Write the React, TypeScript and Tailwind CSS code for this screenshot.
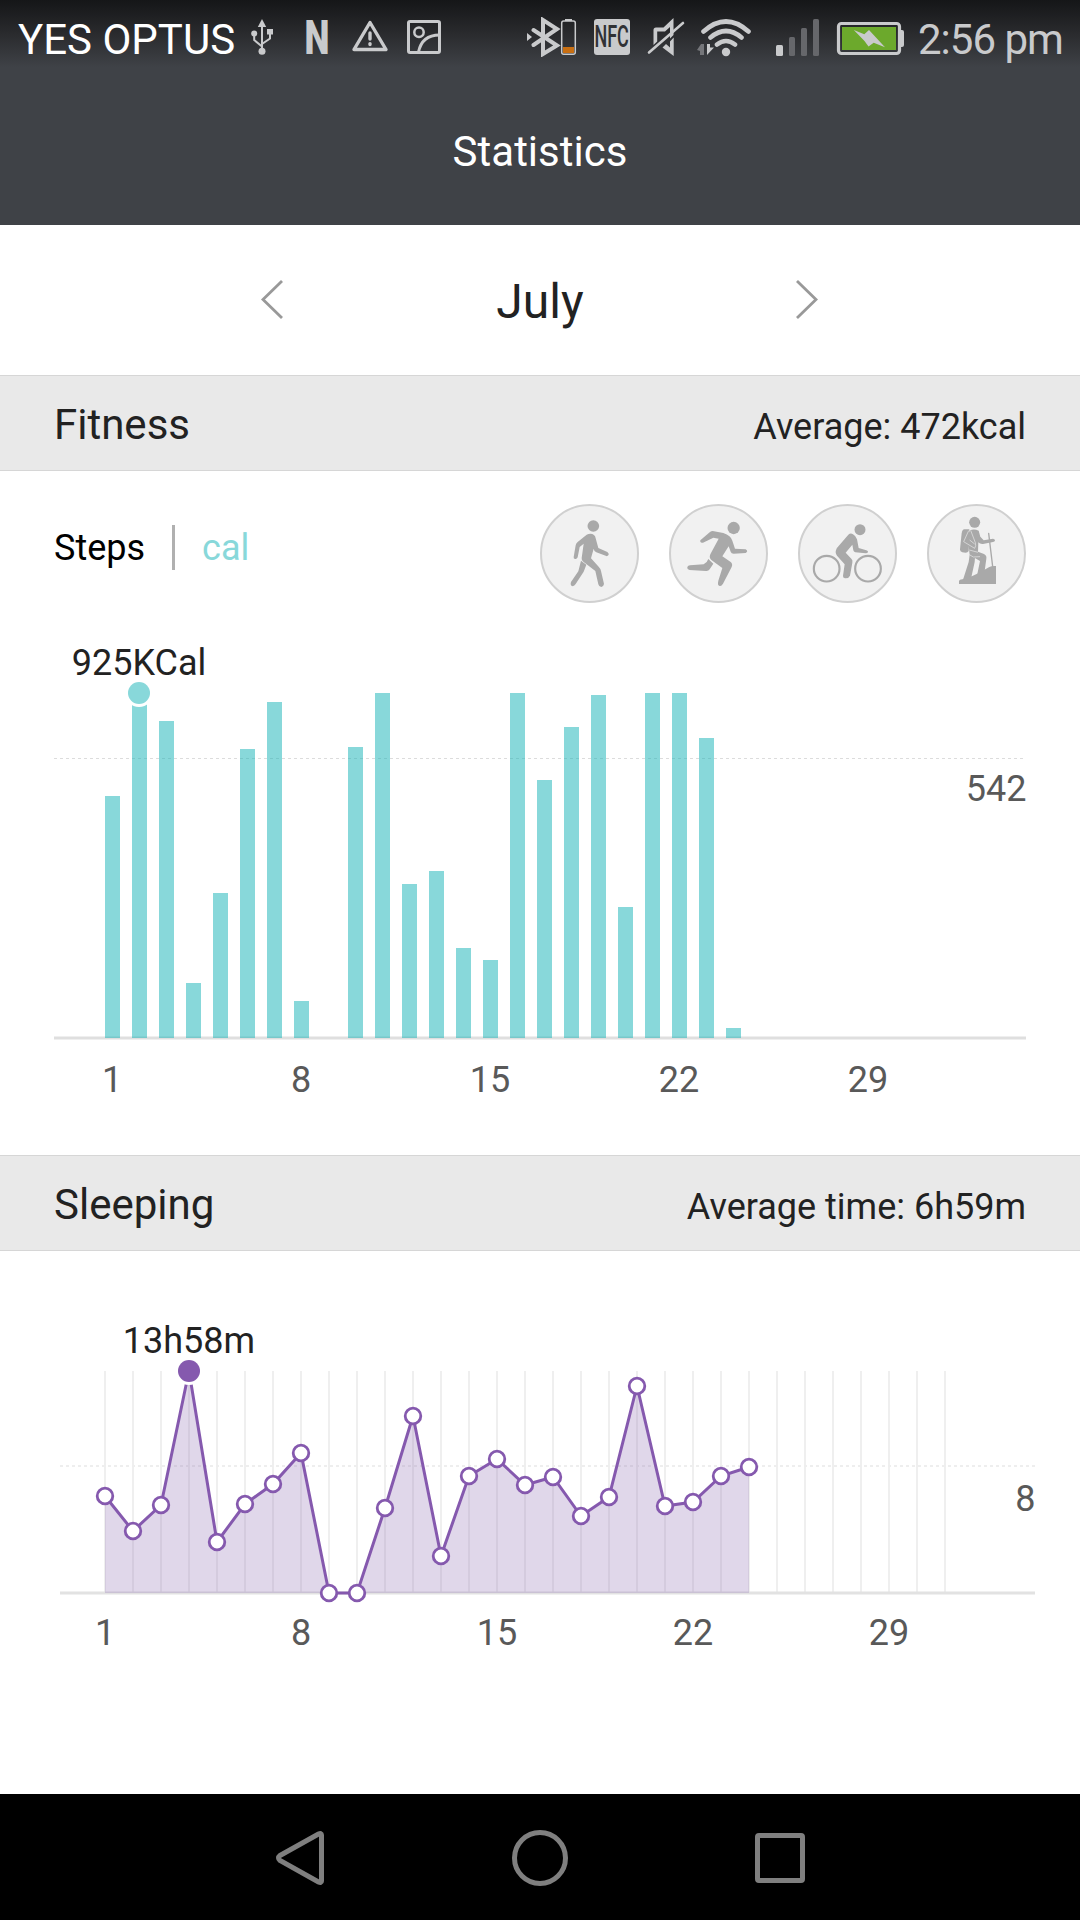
import React from 'react';

// Baseline of the calorie chart and top edge of every bar (null = no data)
const BAR_BASE = 1038;
const barTops: (number | null)[] = [
  796, 693, 721, 983, 893, 749, 702, 1001, null, 747, 693, 884,
  871, 948, 960, 693, 780, 727, 695, 907, 693, 693, 738, 1028,
];

const SLEEP_BASE = 1593;
const sleepPoints = [
  1496, 1531, 1505, 1371, 1542, 1504, 1484, 1453, 1593, 1593, 1508, 1416,
  1556, 1476, 1459, 1485, 1477, 1516, 1497, 1386, 1506, 1502, 1476, 1467,
];

const dayLabels = [1, 8, 15, 22, 29];

const barX = (day: number) => 105 + (day - 1) * 27;
const sleepX = (day: number) => 105 + (day - 1) * 28;

const StatusBar: React.FC = () => (
  <div className="flex h-[79px] items-start bg-linear-to-b from-[#151618] via-[#2b2c2f] via-45% to-[#3f4247] to-85% pl-[18px] text-[42px] leading-[79px]">
    <span className="w-[232px] whitespace-nowrap text-white">YES OPTUS</span>

    {/* usb */}
    <svg className="mt-[17px] h-10 w-6" viewBox="250 17 24 40" fill="#c9cacc">
      <path d="M262 19l4.2 8h-8.4z" />
      <circle cx="262" cy="51.3" r="3.5" />
      <circle cx="254.2" cy="33.5" r="3" />
      <path d="M267 29h6v5.5h-6z" />
      <path d="M262 26v24M254.2 34v6l7.8 6.5M270 34v4.5l-8 5.5" fill="none" stroke="#c9cacc" strokeWidth="2" />
    </svg>

    <span className="ml-[29px] flex w-7 justify-center text-[48px] font-black leading-[75px] text-[#c9cacc]">
      <span className="-mx-2 scale-x-[.74]">N</span>
    </span>

    {/* warning */}
    <svg className="mt-[17px] ml-[20px] h-10 w-[38px]" viewBox="351 17 38 40" fill="none" stroke="#c9cacc" strokeWidth="3.4" strokeLinejoin="round">
      <path d="M370 22.5l16 27h-32z" />
      <path d="M370 33v6M370 43.6v1" strokeLinecap="round" />
    </svg>

    {/* picture */}
    <svg className="mt-[17px] ml-[17px] h-10 w-9" viewBox="406 17 36 40" fill="none" stroke="#c9cacc" strokeWidth="3">
      <rect x="408.5" y="21.5" width="31" height="31" rx="1.5" />
      <circle cx="419" cy="32.3" r="4.7" strokeWidth="2.5" />
      <path d="M418.5 52q3.5-17 21-17" />
    </svg>

    {/* bluetooth + device battery */}
    <svg className="mt-[17px] ml-[84px] h-10 w-[52px]" viewBox="526 17 52 40">
      <path d="M527 33l5 4-5 4z" fill="#c9cacc" />
      <path d="M533.5 30L557 45.5 543 54V20l14 9-23.5 16" fill="none" stroke="#c9cacc" strokeWidth="4" strokeLinecap="round" />
      <rect x="561.7" y="21" width="13.6" height="33.3" rx="2" fill="none" stroke="#c9cacc" strokeWidth="1.5" />
      <path d="M565 19h7v2h-7z" fill="#c9cacc" />
      <path d="M563 47h11v6h-11z" fill="#c96f12" />
    </svg>

    {/* nfc */}
    <span className="mt-[19px] ml-[16px] flex size-9 items-center justify-center rounded-[3px] bg-[#c9cacc] text-[31px] font-medium leading-9 text-[#303135]">
      <span className="scale-x-[.58]">NFC</span>
    </span>

    {/* muted speaker */}
    <svg className="mt-[17px] ml-[17px] h-10 w-[38px]" viewBox="647 17 38 40" fill="#c9cacc">
      <path d="M653.5 45V30q0-2.5 2.5-2.5h7.5L673.5 18v17l-3.5 3.5V27l-5 4.5h-7.8v10z" />
      <path d="M673.7 37.5V56L662.5 47.5l3.5-3.5 4 3.5v-6z" />
      <path d="M649 52.5l34-29.5" stroke="#c9cacc" strokeWidth="2.6" strokeLinecap="round" />
    </svg>

    {/* wifi */}
    <svg className="mt-[17px] ml-[11px] h-10 w-[58px]" viewBox="696 17 58 40" fill="none" stroke="#c9cacc" strokeWidth="4.6" strokeLinecap="round">
      <path d="M703.5 31.5Q726 11.5 748.5 31.5M710.5 37.5Q726 24.5 741.5 37.5M717 44.5Q726 37.5 735 44.5" />
      <circle cx="726" cy="52" r="4.2" fill="#c9cacc" stroke="none" />
      <path d="M697 50l4-6h3v11h-4v-4z" fill="#75767a" stroke="none" />
      <path d="M707 55V44h3v3.5h4z" fill="#c9cacc" stroke="none" />
    </svg>

    {/* mobile signal */}
    <svg className="mt-[17px] ml-[21px] h-10 w-[46px]" viewBox="775 17 46 40" fill="#66676b">
      <rect x="776" y="45" width="7" height="11" rx="1.5" fill="#c9cacc" />
      <rect x="789" y="37" width="6" height="19" rx="1.5" />
      <rect x="801" y="28" width="6" height="28" rx="1.5" />
      <rect x="813" y="19" width="6" height="37" rx="1.5" />
    </svg>

    {/* battery */}
    <svg className="mt-[17px] ml-[15px] h-10 w-[70px]" viewBox="836 17 70 40">
      <rect x="838.5" y="23.5" width="61" height="30" rx="3" fill="none" stroke="#c9cacc" strokeWidth="3.2" />
      <path d="M900 30h2q2 0 2 2v13q0 2-2 2h-2z" fill="#c9cacc" />
      <path d="M842 27h54v23h-54z" fill="#6ca92c" />
      <path d="M853.8 30l10.5 4.3 4.7-4.3 16 17.2-11.3-4.4-5.2 3.7-4-5.5z" fill="#c9cacc" />
    </svg>

    <span className="ml-[12px] whitespace-nowrap text-[#c9cacc] tracking-[-1px]">2:56 pm</span>
  </div>
);

interface SectionHeaderProps {
  title: string;
  summary: string;
}

const SectionHeader: React.FC<SectionHeaderProps> = ({ title, summary }) => (
  <div className="flex h-24 items-baseline justify-between border-y border-[#d6d6d6] bg-[#e9e9e9] px-[54px] text-[#222]">
    <h2 className="text-[42px] leading-[98px]">{title}</h2>
    <span className="text-[36px]">{summary}</span>
  </div>
);

const ActivityButton: React.FC<{ label: string; viewBox: string; children: React.ReactNode }> = ({
  label,
  viewBox,
  children,
}) => (
  <button aria-label={label} className="relative size-[99px] rounded-full border-2 border-[#d0d0d0] bg-[#f1f1f1]">
    <svg className="absolute -inset-[2px] size-[99px]" viewBox={viewBox} fill="#a9a9a9">
      {children}
    </svg>
  </button>
);

const Activities: React.FC = () => (
  <div className="flex gap-[30px]">
    <ActivityButton label="Walk" viewBox="60 42 297 297">
      <circle cx="220" cy="108" r="17.5" />
      <path d="M200 134C212 128 226 132 227 145L235 174L262 186Q271 193 261 199L229 187Q222 184 221 176L213 205L236 230Q242 236 243 243L252 282Q250 291 244 291Q237 291 235 283L226 243L190 215Q184 211 185 204L191 161L179 171L173 202Q170 208 166 207Q160 207 161 201L167 166Q168 160 173 156Z" />
      <path d="M183 212L199 224L191 245L167 282Q162 290 156 288Q150 285 153 276L175 244Z" />
    </ActivityButton>
    <ActivityButton label="Run" viewBox="447 42 297 297">
      <circle cx="641" cy="114" r="18.5" />
      <path d="M578 123L610 129Q633 137 637 152L645 176L677 178Q686 184 677 189L641 191Q634 191 632 185L626 169L607 199L632 216Q639 222 635 231L609 281Q604 289 600 288Q593 287 594 279L595 272L607 234L575 211Q566 204 571 193L596 146L580 143L549 158Q539 160 541 151L570 126Q574 123 578 123Z" />
      <path d="M565 207L580 221L569 238Q565 244 558 243L509 240Q501 238 502 231Q504 226 510 226L551 223L560 216Z" />
    </ActivityButton>
    <ActivityButton label="Ride" viewBox="54 42 297 297">
      <circle cx="240" cy="119" r="16.5" />
      <g fill="none" stroke="#a9a9a9" strokeWidth="6.5">
        <circle cx="140" cy="236" r="38.5" />
        <circle cx="264" cy="236" r="38.5" />
      </g>
      <path d="M205 134Q212 128 219 133Q228 138 231 148L236 174L259 181Q265 183 264 186Q263 190 257 190L226 187Q221 186 220 181L217 164L197 188L214 206Q219 211 217 218L210 257Q206 266 195 265Q188 264 189 257L194 223L171 197Q164 188 169 178Q170 174 174 170Z" />
    </ActivityButton>
    <ActivityButton label="Hike" viewBox="441 42 297 297">
      <circle cx="584" cy="97" r="16.5" />
      <path d="M553 118H568L566 183Q563 188 557 188L547 187Q540 185 540 178L545 130Q547 118 553 118Z" />
      <path d="M570 121Q583 116 596 122L601 140L611 151L639 146Q646 147 645 152Q644 155 639 156L609 162Q600 163 595 157L594 185L612 192Q621 197 619 206L613 250L592 252L600 213L569 195L566 170L555 155Z" />
      <path d="M569 194L585 201L584 216L574 262L549 269L566 216Z" />
      <path d="M537 282V273Q538 268 547 268L577 258L601 247L616 238L628 231Q634 228 642 228H648V282Z" />
      <path d="M626 130L638 230" fill="none" stroke="#a9a9a9" strokeWidth="4" strokeLinecap="round" />
      <path d="M566 122L551 155L584 175Q589 168 586 158L572 121M584 162L569 150M568 180L594 187M568 194L580 201L600 200" fill="none" stroke="#f0f0f0" strokeWidth="1.8" />
    </ActivityButton>
  </div>
);

const FitnessChart: React.FC = () => (
  <svg className="block h-[552px] w-full" viewBox="0 603 1080 552" fontSize="36">
    <path d="M54 758.5H1026" stroke="#dcdcdc" strokeDasharray="3 3" />
    <path d="M54 1038H1026" stroke="#dfdfdf" strokeWidth="3" />
    {barTops.map((top, i) =>
      top === null ? null : (
        <rect key={i} x={barX(i + 1)} y={top} width="15" height={BAR_BASE - top} fill="#11b1b5" fillOpacity="0.5" />
      )
    )}
    <circle cx="139" cy="693" r="14" fill="#fff" />
    <circle cx="139" cy="693" r="11" fill="#88d8da" />
    <text x="139" y="675" textAnchor="middle" fill="#222">925KCal</text>
    <g fill="#595959">
      <text x="1026.5" y="801" textAnchor="end">542</text>
      {dayLabels.map((day) => (
        <text key={day} x={barX(day) + 7} y="1092" textAnchor="middle">{day}</text>
      ))}
    </g>
  </svg>
);

const SleepChart: React.FC = () => {
  const line = sleepPoints.map((y, i) => `${sleepX(i + 1)},${y}`).join(' ');
  const area = `${sleepX(1)},${SLEEP_BASE} ${line} ${sleepX(sleepPoints.length)},${SLEEP_BASE}`;

  return (
    <svg className="block h-[543px] w-full" viewBox="0 1251 1080 543" fontSize="36">
      {Array.from({ length: 31 }, (_, i) => (
        <path key={i} d={`M${sleepX(i + 1)} 1371V${SLEEP_BASE}`} stroke="#efefef" strokeWidth="2" />
      ))}
      <path d="M60 1466H1035" stroke="#eeeeee" strokeWidth="2" strokeDasharray="3 3" />
      <path d="M60 1593H1035" stroke="#e2e2e2" strokeWidth="3" />
      <polygon points={area} fill="#8360aa" fillOpacity="0.25" />
      <polyline points={line} fill="none" stroke="#8559ae" strokeWidth="3" />
      {sleepPoints.map((y, i) =>
        i === 3 ? (
          <g key={i}>
            <circle cx={sleepX(i + 1)} cy={y} r="14" fill="#fff" />
            <circle cx={sleepX(i + 1)} cy={y} r="11" fill="#8559ae" />
          </g>
        ) : (
          <circle key={i} cx={sleepX(i + 1)} cy={y} r="7.8" fill="#fff" stroke="#8559ae" strokeWidth="2.8" />
        )
      )}
      <text x="189" y="1353" textAnchor="middle" fill="#222">13h58m</text>
      <g fill="#595959">
        <text x="1035.5" y="1511" textAnchor="end">8</text>
        {dayLabels.map((day) => (
          <text key={day} x={sleepX(day)} y="1645" textAnchor="middle">{day}</text>
        ))}
      </g>
    </svg>
  );
};

const NavigationBar: React.FC = () => (
  <nav className="flex h-[126px] items-center justify-center gap-[180px] bg-black pt-[2px]">
    <button aria-label="Back">
      <svg className="block size-[60px]" viewBox="0 0 60 60" fill="none" stroke="#7f7f7f" strokeWidth="5">
        <path d="M10 27.5L48.5 6Q51.5 4.5 51.5 7V53Q51.5 55.5 48.5 54L10 32.5Q7 30 10 27.5Z" />
      </svg>
    </button>
    <button aria-label="Home">
      <svg className="block size-[60px]" viewBox="0 0 60 60" fill="none" stroke="#7f7f7f" strokeWidth="5">
        <circle cx="30" cy="30" r="25.5" />
      </svg>
    </button>
    <button aria-label="Recent apps">
      <svg className="block size-[60px]" viewBox="0 0 60 60" fill="none" stroke="#7f7f7f" strokeWidth="5">
        <rect x="7.5" y="7.5" width="45" height="45" rx="1.5" />
      </svg>
    </button>
  </nav>
);

const App: React.FC = () => (
  <div className="flex h-[1920px] w-[1080px] flex-col overflow-hidden bg-white font-['Roboto',sans-serif]">
    <header className="h-[225px] bg-[#3f4247]">
      <StatusBar />
      <h1 className="text-center text-[42px] leading-[146px] text-white">Statistics</h1>
    </header>

    <div className="flex h-[150px] items-center justify-between px-[260px]">
      <button aria-label="Previous month">
        <svg className="block h-10 w-6" viewBox="0 0 24 40" fill="none" stroke="#999" strokeWidth="2.8">
          <path d="M22 1L3 19.5L22 38" />
        </svg>
      </button>
      <span className="pt-[3px] text-[48px] text-[#222]">July</span>
      <button aria-label="Next month">
        <svg className="block h-10 w-6" viewBox="0 0 24 40" fill="none" stroke="#999" strokeWidth="2.8">
          <path d="M1 1L20 19.5L1 38" />
        </svg>
      </button>
    </div>

    <SectionHeader title="Fitness" summary="Average: 472kcal" />
    <div className="flex h-[132px] justify-between px-[54px] pt-[33px]">
      <div className="flex h-[87px] items-center text-[36px]">
        <span className="text-black">Steps</span>
        <span className="mx-[27px] h-[45px] w-[3px] bg-[#b0b0b0]" />
        <span className="text-[#88d8da]">cal</span>
      </div>
      <Activities />
    </div>
    <FitnessChart />

    <SectionHeader title="Sleeping" summary="Average time: 6h59m" />
    <SleepChart />

    <NavigationBar />
  </div>
);

export default App;
